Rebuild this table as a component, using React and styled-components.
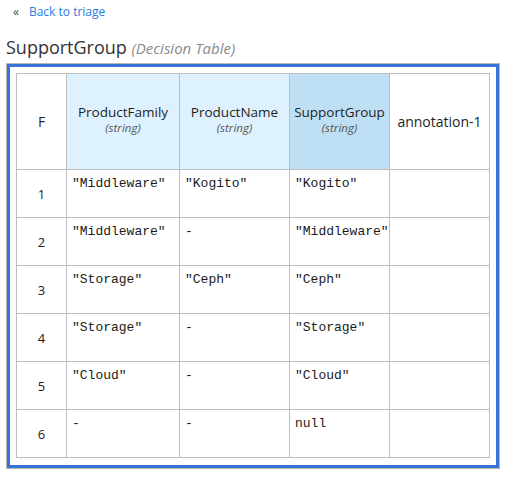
import React from 'react'
import styled, { createGlobalStyle } from 'styled-components'

const GlobalStyle = createGlobalStyle`
  body {
    margin: 0;
    background: #fff;
    font-family: "Open Sans", "Liberation Sans", sans-serif;
    color: #151515;
  }
`

const Page = styled.div`
  padding: 2px 6px 0 6px;
  width: 494px;
`

const BackLink = styled.a`
  display: flex;
  align-items: center;
  gap: 10px;
  padding-left: 7px;
  height: 19px;
  font-size: 12px;
  color: #2b7de0;
  text-decoration: none;
  cursor: pointer;
`

const Chevron = styled.span`
  color: #4a4a4a;
  font-size: 12px;
`

const Title = styled.h1`
  margin: 15px 0 4px 0;
  font-size: 18px;
  font-weight: 400;
  line-height: 22px;
  color: #333;
`

const Subtitle = styled.span`
  font-size: 15px;
  font-style: italic;
  color: #8a8a8a;
`

const Frame = styled.div`
  border: 1px solid #b8b8b8;
`

const Inner = styled.div`
  border: 3px solid #3a72d6;
  padding: 6px 6px 7px 6px;
`

const Table = styled.table`
  border-collapse: collapse;
  table-layout: fixed;
  width: 474px;
`

const HeadCell = styled.th`
  height: ${p => p.$tone ? '89px' : '95px'};
  border: 1px solid #bdbdbd;
  font-weight: 400;
  font-size: ${p => p.$tone ? '13.5px' : '14px'};
  color: #1f1f1f;
  text-align: center;
  vertical-align: middle;
  padding: ${p => p.$tone ? '0 2px 6px 2px' : '0 2px'};
  background: ${p => p.$tone === 'input' ? '#def1fe' : p.$tone === 'output' ? '#bedff4' : '#fff'};
`

const TypeLabel = styled.div`
  font-size: 11.5px;
  font-style: italic;
  color: #555;
  line-height: 14px;
`

const IndexCell = styled.td`
  height: 47px;
  padding: 0;
  border: 1px solid #bdbdbd;
  text-align: center;
  vertical-align: middle;
  font-size: 13px;
  color: #222;
`

const ValueCell = styled.td`
  border: 1px solid #bdbdbd;
  vertical-align: top;
  padding: 6px 0 0 5px;
  font-family: "Liberation Mono", "DejaVu Sans Mono", monospace;
  font-size: 13px;
  color: #1a1a1a;
  white-space: nowrap;
  overflow: visible;
`

const columns = [
  { name: 'ProductFamily', tone: 'input', width: 113 },
  { name: 'ProductName', tone: 'input', width: 110 },
  { name: 'SupportGroup', tone: 'output', width: 100 },
]

const rows = [
  ['"Middleware"', '"Kogito"', '"Kogito"'],
  ['"Middleware"', '-', '"Middleware"'],
  ['"Storage"', '"Ceph"', '"Ceph"'],
  ['"Storage"', '-', '"Storage"'],
  ['"Cloud"', '-', '"Cloud"'],
  ['-', '-', 'null'],
]

const App = () => {
  return (
    <Page>
      <GlobalStyle />
      <BackLink>
        <Chevron>«</Chevron>
        Back to triage
      </BackLink>
      <Title>
        SupportGroup <Subtitle>(Decision Table)</Subtitle>
      </Title>
      <Frame>
        <Inner>
          <Table>
            <colgroup>
              <col style={{ width: 50 }} />
              {columns.map(c => <col key={c.name} style={{ width: c.width }} />)}
              <col style={{ width: 100 }} />
            </colgroup>
            <thead>
              <tr>
                <HeadCell>F</HeadCell>
                {columns.map(c => (
                  <HeadCell key={c.name} $tone={c.tone}>
                    {c.name}
                    <TypeLabel>(string)</TypeLabel>
                  </HeadCell>
                ))}
                <HeadCell>annotation-1</HeadCell>
              </tr>
            </thead>
            <tbody>
              {rows.map((r, i) => (
                <tr key={i}>
                  <IndexCell>{i + 1}</IndexCell>
                  {r.map((v, j) => <ValueCell key={j}>{v}</ValueCell>)}
                  <ValueCell />
                </tr>
              ))}
            </tbody>
          </Table>
        </Inner>
      </Frame>
    </Page>
  )
}

export default App
